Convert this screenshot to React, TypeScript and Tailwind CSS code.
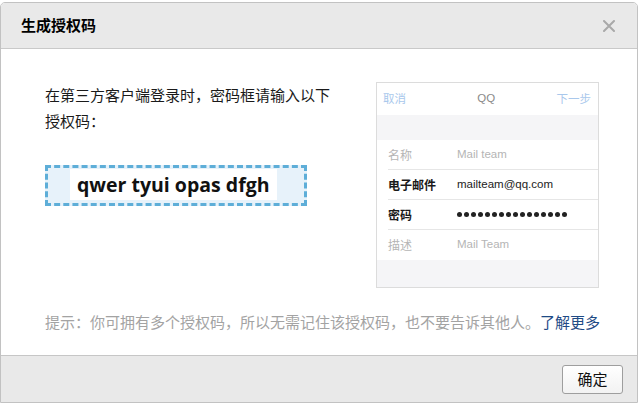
const cjk = { fontFamily: '"Noto Sans CJK SC", "Noto Sans", sans-serif' };

const rows = [
  { label: "名称", value: "Mail team", muted: true },
  { label: "电子邮件", value: "mailteam@qq.com", muted: false },
  { label: "密码", value: "", muted: false, dots: true },
  { label: "描述", value: "Mail Team", muted: true },
];

const PhoneShot = () => {
  return (
    <div className="w-[223px] h-[206px] border border-[#dcdcdc] bg-[#f5f5f7] flex flex-col text-[11.5px]">
      <div className="h-[32px] bg-white flex items-center justify-between pl-[6px] pr-[7px]">
        <span className="text-[#a9c8ec]">取消</span>
        <span className="text-[#8a8a8a] ml-[10px]" style={{ fontFamily: '"Liberation Sans", sans-serif' }}>
          QQ
        </span>
        <span className="text-[#a9c8ec]">下一步</span>
      </div>
      <div className="h-[25px]" />
      <div className="bg-white">
        {rows.map((r, i) => (
          <div key={r.label} className="pl-[11px]">
            <div
              className={
                "h-[30px] flex items-center " + (i < rows.length - 1 ? "border-b border-[#e6e6e6]" : "")
              }
            >
              <span className={"w-[69px] text-[12px] " + (r.muted ? "text-[#b5b5b5]" : "text-[#1a1a1a] font-bold")}>
                {r.label}
              </span>
              {r.dots ? (
                <span className="flex gap-[2px]">
                  {Array.from({ length: 16 }).map((_, k) => (
                    <span key={k} className="w-[5px] h-[5px] rounded-full bg-[#222]" />
                  ))}
                </span>
              ) : (
                <span
                  className={r.muted ? "text-[#b5b5b5]" : "text-[#222]"}
                  style={{ fontFamily: '"Liberation Sans", sans-serif' }}
                >
                  {r.value}
                </span>
              )}
            </div>
          </div>
        ))}
      </div>
    </div>
  );
};

export default function App() {
  return (
    <div className="w-[640px] h-[405px] bg-white pt-[2px]" style={cjk}>
      <div className="w-[638px] h-[401px] border border-[#c2c2c2] rounded-t-[5px] flex flex-col overflow-hidden">
        <div className="h-[46px] shrink-0 bg-[#e9e9e9] border-b border-[#c9c9c9] flex items-center justify-between pl-[20px] pr-[22px]">
          <h1 className="text-[15px] font-bold text-black">生成授权码</h1>
          <svg width="12" height="12" viewBox="0 0 12 12" className="mt-[1px]">
            <path d="M1 1 L11 11 M11 1 L1 11" stroke="#a9a9a9" strokeWidth="2" strokeLinecap="round" />
          </svg>
        </div>

        <div className="flex-1 bg-white pl-[44px] pt-[33px]">
          <div className="flex">
            <div className="w-[331px]">
              <p className="w-[292px] text-[15px] leading-[26px] text-[#1a1a1a]">
                在第三方客户端登录时，密码框请输入以下授权码：
              </p>
              <div className="mt-[31px] w-[262px] h-[41px] border-[3px] border-dashed border-[#5eaed8] bg-[#e7f2fa] pl-[22px] pt-[1px]">
                <span
                  className="inline-block bg-white h-[31px] w-[207px] pl-[7px] text-[19.5px] font-bold leading-[31px] text-[#111]"
                  style={{ fontFamily: '"Open Sans", "Liberation Sans", sans-serif' }}
                >
                  qwer tyui opas dfgh
                </span>
              </div>
            </div>
            <PhoneShot />
          </div>
          <p className="mt-[21px] text-[15px] leading-[26px] text-[#a3a3a3]">
            提示：你可拥有多个授权码，所以无需记住该授权码，也不要告诉其他人。
            <a className="text-[#1f4b85]">了解更多</a>
          </p>
        </div>

        <div className="h-[47px] shrink-0 bg-[#e9e9e9] border-t border-[#c6c6c6] flex items-center justify-end pr-[14px]">
          <button className="w-[61px] h-[29px] rounded-[3px] border border-[#9e9e9e] bg-gradient-to-b from-white to-[#f2f2f2] text-[15px] text-[#111]">
            确定
          </button>
        </div>
      </div>
    </div>
  );
}
